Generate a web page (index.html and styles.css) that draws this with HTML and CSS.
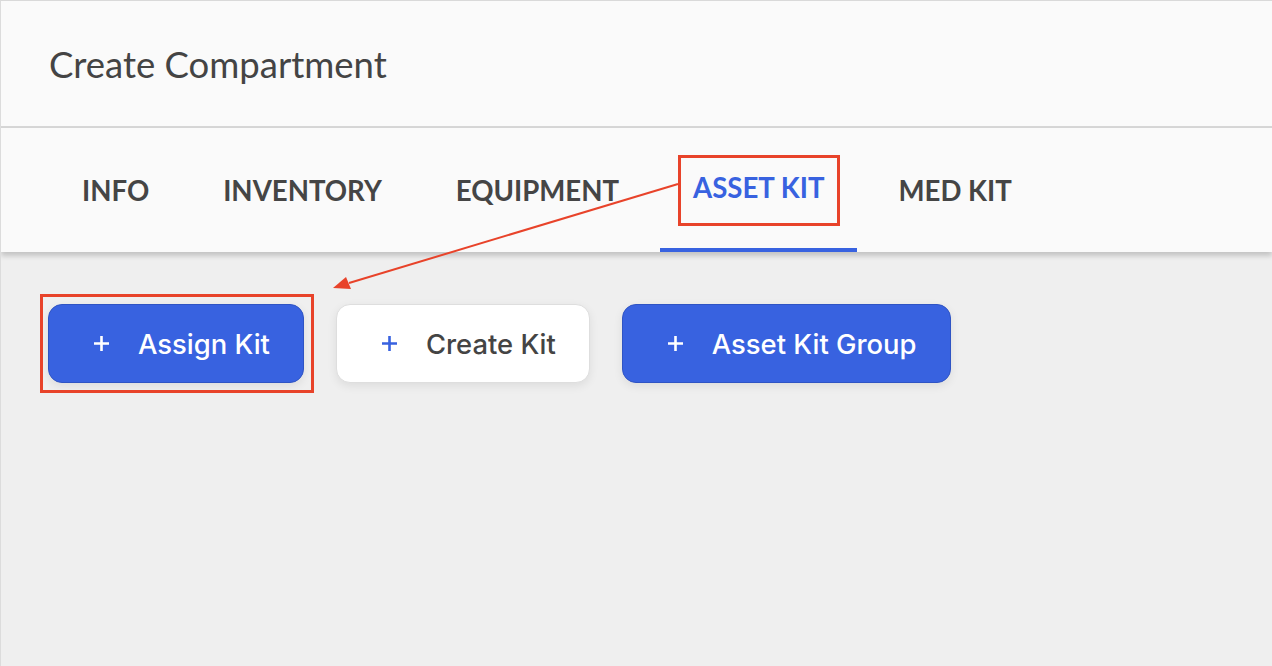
FILE: index.html
```html
<!DOCTYPE html>
<html lang="en">
<head>
  <meta charset="UTF-8">
  <meta name="viewport" content="width=device-width, initial-scale=1.0">
  <title>Create Compartment</title>
  <link rel="stylesheet" href="styles.css">
</head>
<body>

  <div class="page">
    <header class="header">
      <h1 class="title">Create Compartment</h1>
    </header>

    <nav class="tabs">
      <div class="tab">INFO</div>
      <div class="tab">INVENTORY</div>
      <div class="tab">EQUIPMENT</div>
      <div class="tab active"><span class="mark">ASSET KIT</span></div>
      <div class="tab">MED KIT</div>
    </nav>

    <div class="actions">
      <div class="mark-box">
        <button class="btn primary">
          <svg class="plus" viewBox="0 0 17 17"><path d="M8.5 1v15M1 8.5h15"/></svg>
          Assign Kit
        </button>
      </div>
      <button class="btn light">
        <svg class="plus" viewBox="0 0 17 17"><path d="M8.5 1v15M1 8.5h15"/></svg>
        Create Kit
      </button>
      <button class="btn primary">
        <svg class="plus" viewBox="0 0 17 17"><path d="M8.5 1v15M1 8.5h15"/></svg>
        Asset Kit Group
      </button>
    </div>

    <!-- annotation arrow drawn over the page -->
    <svg class="arrow" width="1272" height="666" viewBox="0 0 1272 666">
      <line x1="678" y1="184" x2="349" y2="283"/>
      <polygon points="333,288 351,289 346,277"/>
    </svg>
  </div>

</body>
</html>
```

FILE: styles.css
```css
body {
  margin: 0;
  background: #efefef;
  font-family: 'Lato', 'Noto Sans', sans-serif;
}
.page {
  position: relative;
  height: 666px;
  box-sizing: border-box;
  border-top: 1px solid #d9d9d9;
  border-left: 1px solid #dcdcdc;
  overflow: hidden;
}
.header {
  height: 125px;
  background: #fafafa;
  border-bottom: 2px solid #d6d6d6;
  display: flex;
  align-items: center;
  padding-left: 48px;
}
.title {
  margin: 0;
  font-size: 36.5px;
  font-weight: 400;
  color: #444;
}
.tabs {
  height: 124px;
  background: #fafafa;
  display: flex;
  gap: 8px;
  padding-left: 48px;
  box-shadow: 0 4px 5px rgba(0, 0, 0, 0.18);
  position: relative;
}
.tab {
  padding: 0 33px;
  display: flex;
  align-items: center;
  font-size: 27.6px;
  font-weight: 700;
  color: #454545;
  box-sizing: border-box;
  border-bottom: 4px solid transparent;
  padding-top: 4px;
}
.tab.active {
  color: #3862e0;
  border-bottom-color: #3862e0;
}
.mark {
  position: relative;
  top: -3px;
}
.mark::after {
  content: '';
  position: absolute;
  left: -15px;
  right: -16px;
  top: -16px;
  bottom: -22px;
  border: 3px solid #e8432a;
}
.actions {
  display: flex;
  align-items: center;
  gap: 32px;
  padding: 52px 0 0 47px;
}
.mark-box {
  position: relative;
  display: flex;
}
.mark-box::after {
  content: '';
  position: absolute;
  left: -8px;
  right: -10px;
  top: -10px;
  bottom: -10px;
  border: 3px solid #e8432a;
}
.btn {
  height: 79px;
  display: flex;
  align-items: center;
  gap: 28px;
  padding: 0 33px 0 44px;
  border-radius: 14px;
  font-family: 'Inter', sans-serif;
  font-size: 27.4px;
  font-weight: 500;
  cursor: pointer;
  box-shadow: 0 3px 10px rgba(0, 0, 0, 0.08);
}
.btn.primary {
  background: #3862e0;
  border: 1px solid #2f54c4;
  color: #fff;
}
.btn.light {
  background: #fff;
  border: 1px solid #dedede;
  color: #444;
}
.plus {
  width: 17px;
  height: 17px;
  fill: none;
  stroke: #fff;
  stroke-width: 2.6;
}
.btn.light .plus {
  stroke: #3862e0;
}
.arrow {
  position: absolute;
  top: -1px;
  left: -1px;
  pointer-events: none;
}
.arrow line {
  stroke: #e8432a;
  stroke-width: 2;
}
.arrow polygon {
  fill: #e8432a;
}
```
